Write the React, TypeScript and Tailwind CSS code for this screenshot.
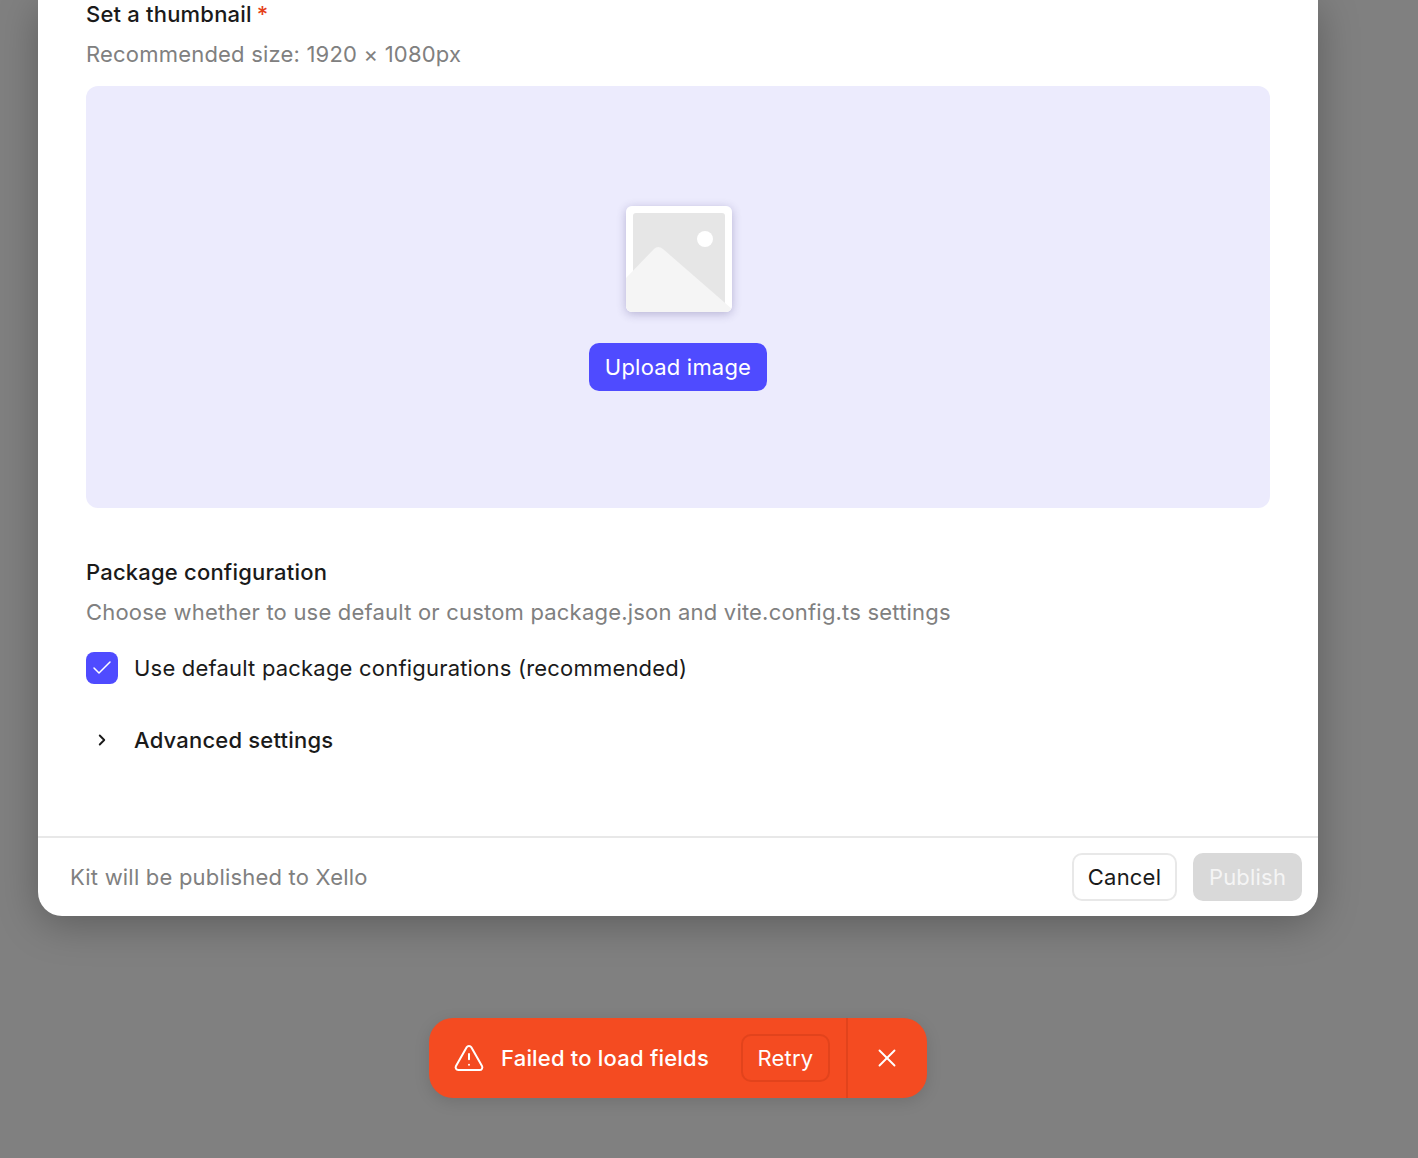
import React from 'react';
import { ChevronRight, Check, TriangleAlert, X } from 'lucide-react';

const ThumbnailPlaceholder: React.FC = () => (
  <svg width="106" height="106" viewBox="0 0 106 106" className="block">
    <defs>
      <clipPath id="frame">
        <rect width="106" height="106" rx="6" />
      </clipPath>
    </defs>
    <g clipPath="url(#frame)">
      <rect width="106" height="106" fill="#ffffff" />
      <rect x="7" y="7" width="92" height="92" rx="3" fill="#e6e6e6" />
      <path d="M0 72 L28 43 Q32 39 37 43 L106 103 V106 H0 Z" fill="#f5f5f5" />
      <circle cx="79" cy="33" r="8" fill="#ffffff" />
    </g>
  </svg>
);

const App: React.FC = () => {
  return (
    <div className="relative h-[1158px] w-[1418px] overflow-hidden bg-[#808080] font-['Inter',sans-serif] text-[22px] leading-8 tracking-[0.2px] text-[#1a1a1a]">
      <div className="ml-[38px] flex h-[916px] w-[1280px] flex-col rounded-b-[24px] bg-white shadow-[0_8px_40px_rgba(0,0,0,0.28)]">
        <div className="flex-1 px-12">
          <div className="flex h-7 items-center gap-[5px] font-medium">
            <span>Set a thumbnail</span>
            <span className="text-[#e5401a]">*</span>
          </div>
          <p className="mt-[10px] text-[#808080]">Recommended size: 1920 × 1080px</p>
          <div className="mt-4 flex h-[422px] flex-col items-center rounded-xl bg-[#ecebfd] pt-[120px]">
            <div className="ml-[2px] rounded-md shadow-[0_2px_10px_rgba(60,50,120,0.3)]">
              <ThumbnailPlaceholder />
            </div>
            <button className="mt-[31px] h-12 w-[178px] rounded-[10px] bg-[#4f4bff] text-white">Upload image</button>
          </div>
          <h3 className="mt-12 font-medium">Package configuration</h3>
          <p className="mt-2 text-[#808080]">Choose whether to use default or custom package.json and vite.config.ts settings</p>
          <label className="mt-6 flex items-center gap-4">
            <span className="flex h-8 w-8 items-center justify-center rounded-lg bg-[#4f4bff] text-white">
              <Check size={24} strokeWidth={1.5} />
            </span>
            <span>Use default package configurations (recommended)</span>
          </label>
          <div className="mt-10 flex items-center gap-4 font-medium">
            <span className="flex w-8 justify-center">
              <ChevronRight size={18} strokeWidth={2.5} />
            </span>
            <span>Advanced settings</span>
          </div>
        </div>
        <div className="flex h-20 items-center justify-between border-t-2 border-[#e8e8e8] pr-4 pl-8">
          <span className="text-[#808080]">Kit will be published to Xello</span>
          <div className="flex gap-4">
            <button className="h-12 w-[105px] rounded-[10px] border-2 border-[#e8e8e8] bg-white">Cancel</button>
            <button className="h-12 w-[109px] rounded-[10px] bg-[#d9d9d9] text-[#f5f5f5]">Publish</button>
          </div>
        </div>
      </div>

      <div className="absolute top-[1018px] left-[429px] flex h-20 w-[498px] items-center rounded-3xl bg-[#f44b21] text-white shadow-[0_4px_16px_rgba(0,0,0,0.12)]">
        <TriangleAlert size={32} strokeWidth={1.5} className="ml-6" />
        <span className="ml-4 font-medium">Failed to load fields</span>
        <button className="ml-8 h-12 w-[89px] rounded-[10px] border-2 border-[#e2431c]">Retry</button>
        <div className="ml-4 h-full w-[2px] bg-[#e2431c]" />
        <span className="flex flex-1 justify-center">
          <X size={30} strokeWidth={1.5} />
        </span>
      </div>
    </div>
  );
};

export default App;
